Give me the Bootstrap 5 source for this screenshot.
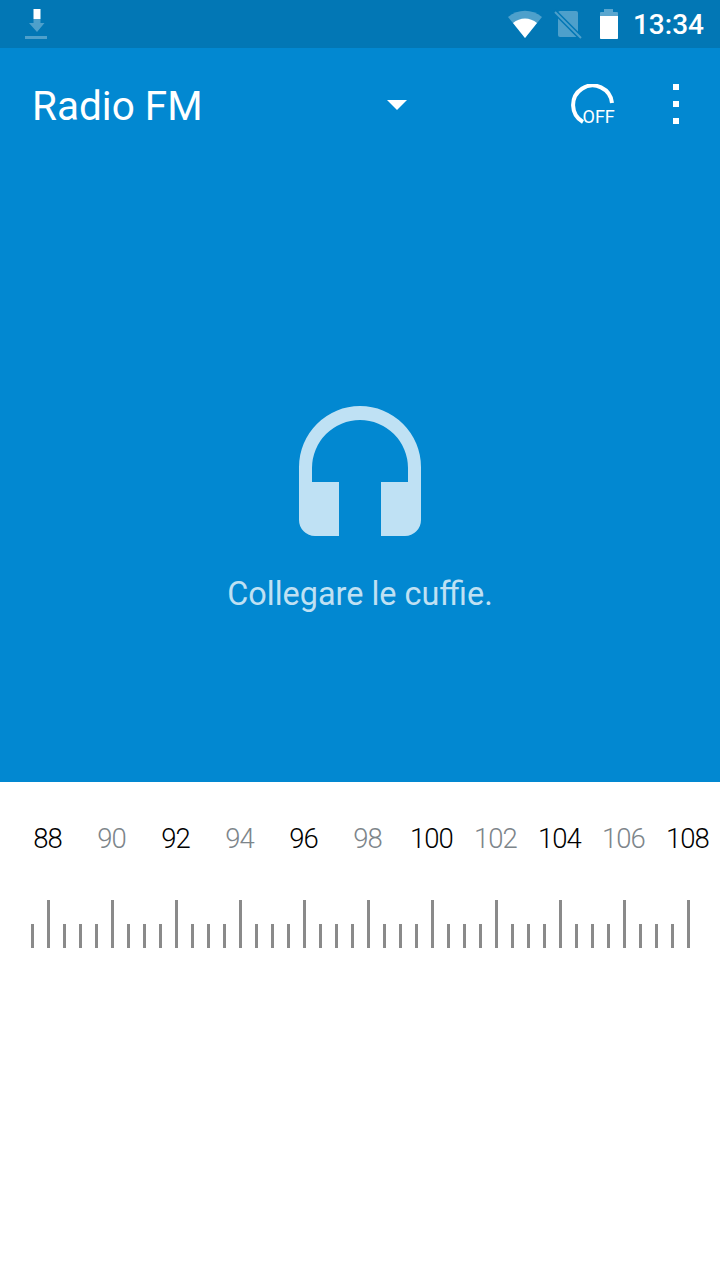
<!DOCTYPE html>
<html lang="it">
<head>
    <meta charset="UTF-8">
    <meta name="viewport" content="width=device-width, initial-scale=1.0">
    <title>Radio FM</title>
    <link href="https://cdn.jsdelivr.net/npm/bootstrap@5.3.0/dist/css/bootstrap.min.css" rel="stylesheet">
    <style>
        body { font-family: Roboto, "Liberation Sans", sans-serif; width: 720px; height: 1280px; overflow: hidden; background: #fff; }
        svg { display: block; flex: none; }
        .status-strip { height: 48px; background: #0277b5; color: #fff; padding-left: 25px; padding-right: 16px; }
        .clock-text { font-size: 28px; font-weight: 500; line-height: 48px; margin-left: 14px; padding-top: 2px; }
        .sim-gap { margin-left: 11px; }
        .battery-gap { margin-left: 17px; }
        .main-panel { height: 734px; background: #0288d1; }
        .tool-strip { height: 114px; padding-left: 32px; }
        .app-title { width: 355px; font-size: 40.500px; line-height: 114px; padding-top: 2px; }
        .off-icon { margin-left: 164px; }
        .dots-icon { margin-left: 56px; margin-bottom: 2px; }
        .empty-state { padding-top: 244px; }
        .empty-label { margin-top: 38px; font-size: 32.400px; line-height: 40px; color: rgba(255,255,255,.75); }
        .scale-labels { padding-top: 37px; padding-left: 15.500px; height: 118px; }
        .scale-num { width: 64px; text-align: center; font-size: 27.500px; line-height: 40px; letter-spacing: -1px; font-weight: 300; color: #000; flex: none; }
        .scale-num.is-dim { color: #7d858a; }
        .tick-row { padding-left: 31px; height: 48px; gap: 13px; }
        .tick-mark { width: 3px; height: 24px; background: #8a8a8a; flex: none; }
        .tick-mark.is-tall { height: 48px; }
    </style>
</head>
<body>
    <!-- Status bar -->
    <div class="status-strip d-flex align-items-center">
        <svg width="24" height="30" viewBox="0 0 24 30">
            <path d="M8.500 10h7v4H19.500L12 23 4 14h4.500z" fill="#fff" opacity=".3"/>
            <rect x="8.500" y="0" width="7" height="10" fill="#fff"/>
            <rect x="0" y="27" width="22" height="3" fill="#fff" opacity=".3"/>
        </svg>
        <div class="d-flex align-items-center ms-auto">
            <svg width="36" height="30" viewBox="0 0 36 30">
                <path d="M18 29 1 8C11-.500 25-.500 35 8z" fill="#fff" opacity=".3"/>
                <path d="M18 29 6 14C13 8 23 8 30 14z" fill="#fff"/>
            </svg>
            <svg class="sim-gap" width="28" height="30" viewBox="0 0 28 30">
                <path d="M4 4a2 2 0 0 1 2-2H22a2 2 0 0 1 2 2V26a2 2 0 0 1-2 2H6a2 2 0 0 1-2-2z" fill="#fff" opacity=".3"/>
                <path d="M0 2 28 30" stroke="#0277b5" stroke-width="5"/>
                <path d="M1 3 27 29" stroke="#fff" stroke-opacity=".3" stroke-width="2"/>
            </svg>
            <svg class="battery-gap" width="20" height="30" viewBox="0 0 20 30">
                <path d="M5 0h9v3h4a1 1 0 0 1 1 1v25a1 1 0 0 1-1 1H2a1 1 0 0 1-1-1V4a1 1 0 0 1 1-1h3z" fill="#fff" opacity=".35"/>
                <path d="M1 7h18v22a1 1 0 0 1-1 1H2a1 1 0 0 1-1-1z" fill="#fff"/>
            </svg>
            <span class="clock-text">13:34</span>
        </div>
    </div>

    <!-- Blue area -->
    <div class="main-panel text-white">
        <div class="tool-strip d-flex align-items-center">
            <div class="app-title">Radio FM</div>
            <svg width="20" height="10" viewBox="0 0 20 10"><path d="M0 0h20L10 10z" fill="#fff"/></svg>
            <svg class="off-icon" width="46" height="42" viewBox="0 0 46 42">
                <path d="M12 38A19.500 19.500 0 1 1 41 19" fill="none" stroke="#fff" stroke-width="4"/>
                <text x="11.500" y="38.500" font-family="Roboto, sans-serif" font-size="18" fill="#fff">OFF</text>
            </svg>
            <svg class="dots-icon" width="6" height="40" viewBox="0 0 6 40">
                <rect width="6" height="6" fill="#fff"/><rect y="17" width="6" height="6" fill="#fff"/><rect y="34" width="6" height="6" fill="#fff"/>
            </svg>
        </div>
        <div class="empty-state d-flex flex-column align-items-center">
            <svg width="122" height="130" viewBox="0 0 122 130">
                <path d="M0 61A61 61 0 0 1 122 61V114A16 16 0 0 1 106 130H82V76H109V62A48 48 0 0 0 13 62V76H40V130H16A16 16 0 0 1 0 114Z" fill="#fff" fill-opacity=".75"/>
            </svg>
            <div class="empty-label">Collegare le cuffie.</div>
        </div>
    </div>

    <!-- Frequency scale -->
    <div class="scale-labels d-flex" id="scaleLabels"></div>
    <div class="tick-row d-flex align-items-end" id="tickRow"></div>

    <script src="https://cdn.jsdelivr.net/npm/bootstrap@5.3.0/dist/js/bootstrap.bundle.min.js"></script>
    <script>
        const labels = document.getElementById('scaleLabels');
        for (let i = 0; i <= 10; i++) {
            const num = document.createElement('div');
            num.className = 'scale-num' + (i % 2 ? ' is-dim' : '');
            num.textContent = 88 + i * 2;
            labels.appendChild(num);
        }
        const ticks = document.getElementById('tickRow');
        for (let i = 0; i < 42; i++) {
            const tick = document.createElement('div');
            tick.className = 'tick-mark' + (i % 4 === 1 ? ' is-tall' : '');
            ticks.appendChild(tick);
        }
    </script>
</body>
</html>
